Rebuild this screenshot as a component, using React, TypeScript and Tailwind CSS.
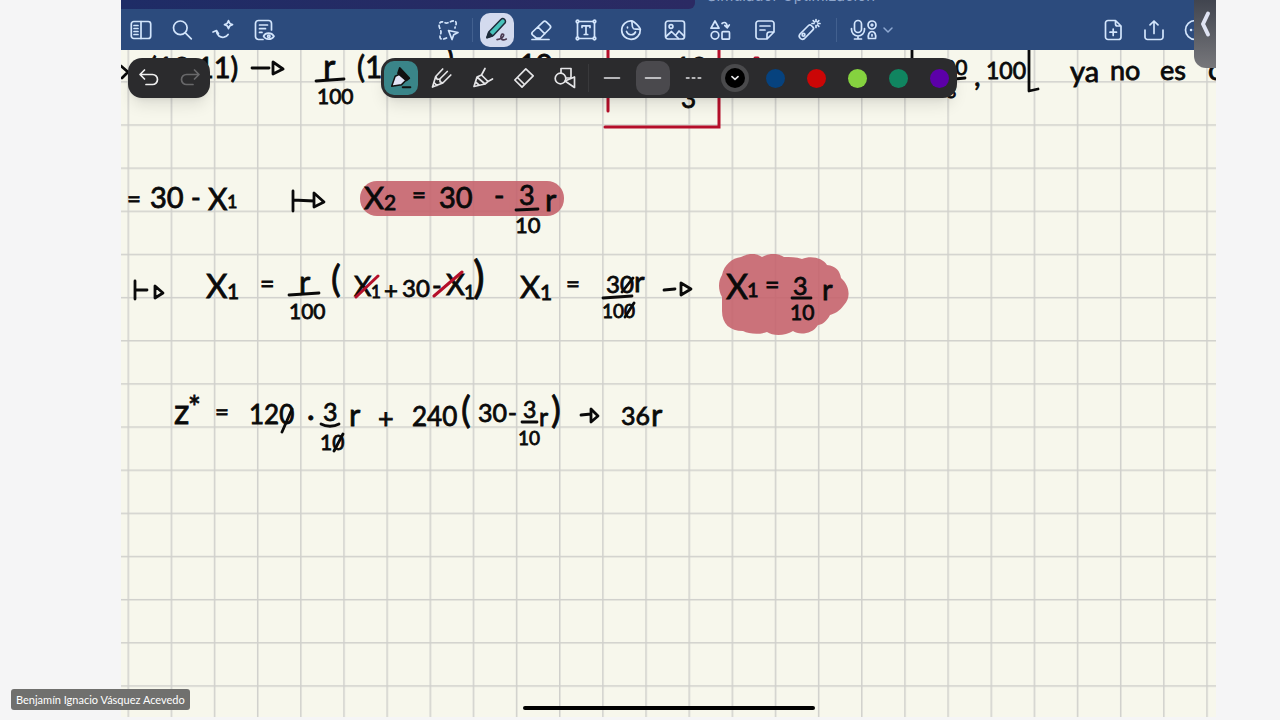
import { type ReactNode, useState } from 'react';

type IconProps = { children: ReactNode; className?: string };

const Icon = ({ children, className = 'size-6' }: IconProps) => (
    <svg
        viewBox="0 0 24 24"
        fill="none"
        stroke="currentColor"
        strokeWidth="1.7"
        strokeLinecap="round"
        strokeLinejoin="round"
        aria-hidden="true"
        className={`${className} shrink-0`}
    >
        {children}
    </svg>
);

type Tool = { name: string; icon: ReactNode };

const leftTools: Tool[] = [
    {
        name: 'Sidebar',
        icon: (
            <Icon>
                <rect x="2.3" y="3.5" width="19.4" height="17" rx="2.5" />
                <path d="M12 3.5v17M5 7.5h4M5 10.5h4M5 13.5h4M5 16.5h4" />
            </Icon>
        ),
    },
    {
        name: 'Search',
        icon: (
            <Icon>
                <circle cx="10.3" cy="9.8" r="6.8" />
                <path d="m15.3 14.8 6 6" />
            </Icon>
        ),
    },
    {
        name: 'Assistant',
        icon: (
            <Icon>
                <path d="m2 14 3.5-1.5 2 3.2M5.300 13c.6 4.500 4 6.800 7.600 6.200 2-.4 3.400-1.500 4.200-2.700" />
                <path d="M17.500 2.700c.5 2.500 1.400 3.500 4 4-2.600.5-3.500 1.500-4 4-.5-2.500-1.400-3.500-4-4 2.600-.5 3.500-1.500 4-4Z" />
            </Icon>
        ),
    },
    {
        name: 'Read mode',
        icon: (
            <Icon>
                <path d="M11 21.500H6.500a3 3 0 0 1-3-3v-13a3 3 0 0 1 3-3h10a3 3 0 0 1 3 3V12M7.500 7h8M7.500 10.700h6M7.500 14.400h2.500" />
                <path d="M11.500 18.200c2-4 8-4 10.500 0-2.500 4-8.500 4-10.500 0Z" />
                <circle cx="16.800" cy="18.200" r="1.200" />
            </Icon>
        ),
    },
];

const middleTools: Tool[] = [
    {
        name: 'Pen',
        icon: (
            <Icon className="size-7">
                <path
                    d="m3.500 18.500 2-5.500L15.300 3a2.300 2.300 0 0 1 3.300 3.300L9 16.500Z"
                    fill="#48c2bb"
                    stroke="#1d2b3a"
                    strokeWidth="1.300"
                />
                <path d="m3.500 18.500 1.500-4.500 3 3Z" fill="#1d2b3a" stroke="#1d2b3a" />
                <path
                    d="M12 20.200c3.500-.2 6.500-3 5.500-4.500-1.200-1.200-3 1.800-1.800 3.800.8 1.300 2.500 1.200 4.300.2"
                    stroke="#4a3a52"
                    strokeWidth="1.400"
                />
            </Icon>
        ),
    },
    {
        name: 'Eraser',
        icon: (
            <Icon>
                <path d="M3.500 14 14.200 3.800a2.200 2.200 0 0 1 3.100 0l3.600 3.600a2.200 2.200 0 0 1 0 3.100L11.500 20H7.200l-3.700-3.200a2 2 0 0 1 0-2.800ZM9 9l6.800 6.800M3 21.500h17" />
            </Icon>
        ),
    },
    {
        name: 'Text box',
        icon: (
            <Icon>
                <path d="M5 3.500h14M5 20.500h14M3.500 5v14M20.500 5v14M8 9.500V7.800h8v1.700M12 8v8.500M10.300 16.500h3.400" />
                <circle cx="3.500" cy="3.500" r="1.300" />
                <circle cx="20.500" cy="3.500" r="1.300" />
                <circle cx="3.500" cy="20.500" r="1.300" />
                <circle cx="20.500" cy="20.500" r="1.300" />
            </Icon>
        ),
    },
    {
        name: 'Sticker',
        icon: (
            <Icon>
                <path d="M12.500 2.800a9.300 9.300 0 1 0 8.800 8.800c-.2-2.500-6.300-8.600-8.800-8.800Z" />
                <path d="M12.500 2.800c1.500 2.200-.5 6 2 7.800 2 1.300 5-.3 6.800 1M7.500 13.500c1.500 4 7 4.500 9 .5M8.500 9v.8" />
            </Icon>
        ),
    },
    {
        name: 'Image',
        icon: (
            <Icon>
                <rect x="2.500" y="3" width="19" height="18" rx="2.500" />
                <circle cx="8" cy="8.500" r="1.900" />
                <path d="m3 18.500 5.500-5 4 4 3.500-4.500 5.200 5.200M12.500 17.500l3 3" />
            </Icon>
        ),
    },
    {
        name: 'Elements',
        icon: (
            <Icon>
                <path d="m7 3 4 7.200H3ZM14 5.500c2.500-2 5-1 5.300 3.500M16.800 7.500l2.500 2.300 2-2.800" />
                <circle cx="7" cy="17.300" r="3.800" />
                <rect x="14" y="13.700" width="7.500" height="7.500" rx="1" />
            </Icon>
        ),
    },
    {
        name: 'Sticky note',
        icon: (
            <Icon>
                <path d="M14 21H5.500a2.500 2.500 0 0 1-2.500-2.500v-13A2.500 2.500 0 0 1 5.500 3h13A2.500 2.500 0 0 1 21 5.500V14ZM14 21v-4.500a2.500 2.500 0 0 1 2.500-2.500H21M7 8h10M7 12h5" />
            </Icon>
        ),
    },
    {
        name: 'Laser pointer',
        icon: (
            <Icon>
                <path d="m3 16 8.500-8.500a2 2 0 0 1 2.800 0l1.600 1.600a2 2 0 0 1 0 2.800L7.500 20.500A3.200 3.200 0 0 1 3 16Z" />
                <circle cx="6.500" cy="16.700" r="1.400" />
                <path d="M19 1.500v2M19 7.500v2M15 5.500h2M21 5.500h2M16.200 2.700l1.300 1.300M20.500 7l1.300 1.300M21.800 2.700 20.500 4" />
            </Icon>
        ),
    },
];

const rightTools: Tool[] = [
    {
        name: 'Add page',
        icon: (
            <Icon>
                <path d="M14.500 2.500H7A2.500 2.500 0 0 0 4.500 5v14A2.500 2.500 0 0 0 7 21.500h10.500A2.500 2.500 0 0 0 20 19V8ZM14.500 2.500V6a2 2 0 0 0 2 2H20M12.200 11v6.500M9 14.200h6.500" />
            </Icon>
        ),
    },
    {
        name: 'Share',
        icon: (
            <Icon>
                <path d="M3 12v7A2.500 2.500 0 0 0 5.500 21.500h13a2.500 2.500 0 0 0 2.500-2.500v-7M12 15.500V3M8 6.800 12 3l4 3.800" />
            </Icon>
        ),
    },
    {
        name: 'More',
        icon: (
            <Icon>
                <circle cx="12" cy="12" r="9.500" />
                <path d="M8 12h.1M12 12h.1M16 12h.1" strokeWidth="2.500" />
            </Icon>
        ),
    },
];

const penStyles: Tool[] = [
    {
        name: 'Fountain pen',
        icon: (
            <Icon className="size-7">
                <path
                    d="m4 19 3-8.500 4.500-2 5 5.200-4 4Z"
                    fill="#e3e4f6"
                    stroke="#111"
                    strokeWidth="1.300"
                />
                <path d="m11 3.500 8 8.700-2.500 1.800L9.500 8Z" fill="#111" stroke="#111" />
                <path d="M13.500 20H20" stroke="#111" />
            </Icon>
        ),
    },
    {
        name: 'Ball pen',
        icon: (
            <Icon>
                <path d="m2.500 21 3.200-10.500 7-7.500M2.500 21l10.300-4 8-8M5.700 10.500l1.500 2.800 2.600-.3.300 2.800 2.700 1.200M9.800 13l7.500-7.500M4 16.500l3 3" />
            </Icon>
        ),
    },
    {
        name: 'Brush pen',
        icon: (
            <Icon>
                <path d="m3 20.500 3-9.500 8 7ZM6 11l4.500-2 6.500 6.500-3 2.500M10.500 9l3.500-6.500M17 15.500l4.500-2.500M4.500 16l3.500 3" />
            </Icon>
        ),
    },
    {
        name: 'Highlighter',
        icon: (
            <Icon>
                <path d="m2.800 14 11-11.200 7.400 7L10 21.200ZM5.500 11.500l7 7" />
            </Icon>
        ),
    },
    {
        name: 'Shape pen',
        icon: (
            <Icon>
                <path d="M8 7V2.500h10V12H13" />
                <circle cx="7.500" cy="12.500" r="5.300" />
                <path d="m12 15 9.500-4v10.500Z" />
            </Icon>
        ),
    },
];

const strokes = [
    { name: 'Medium stroke', dash: undefined },
    { name: 'Thin stroke', dash: undefined },
    { name: 'Dashed stroke', dash: '3 4' },
];

const swatches = [
    { name: 'Black', className: 'bg-black' },
    { name: 'Blue', className: 'bg-[#06427e]' },
    { name: 'Red', className: 'bg-[#cb0606]' },
    { name: 'Lime', className: 'bg-[#85d23f]' },
    { name: 'Green', className: 'bg-[#108560]' },
    { name: 'Purple', className: 'bg-[#5c00a8]' },
];

// how far the page is scrolled to the right, sheet coordinates start there
const SCROLL_X = 121;
const CELL = 43.15;

// x, baseline, font size, text
const notes: [number, number, number, string][] = [
    [149, 78, 29, '(10,11)'],
    [323, 79, 34, 'r'],
    [317, 104, 21, '100'],
    [357, 78, 30, '(1'],
    [446, 70, 30, ')'],
    [519, 75, 29, '10'],
    [674, 78, 29, '10'],
    [681, 108, 26, '3'],
    [931, 75, 21, '100'],
    [946, 98, 18, '3'],
    [974, 86, 29, ','],
    [986, 79, 23, '100'],
    [1070, 82, 29, 'ya'],
    [1110, 80, 27, 'no'],
    [1160, 80, 27, 'es'],
    [1208, 80, 29, 'c'],

    [127, 207, 24, '='],
    [150, 208, 29, '30'],
    [191, 207, 26, '-'],
    [208, 210, 30, 'X'],
    [227, 208, 18, '1'],
    [364, 209, 31, 'X'],
    [384, 210, 21, '2'],
    [412, 203, 24, '='],
    [439, 208, 29, '30'],
    [494, 206, 28, '-'],
    [519, 205, 27, '3'],
    [515, 233, 22, '10'],
    [545, 211, 31, 'r'],

    [206, 298, 33, 'X'],
    [227, 299, 21, '1'],
    [260, 293, 25, '='],
    [299, 293, 31, 'r'],
    [289, 319, 21, '100'],
    [331, 292, 37, '('],
    [354, 296, 27, 'X'],
    [371, 298, 17, '1'],
    [384, 299, 24, '+'],
    [402, 297, 24, '30'],
    [432, 295, 26, '-'],
    [446, 295, 29, 'X'],
    [464, 299, 19, '1'],
    [473, 293, 44, ')'],
    [520, 298, 31, 'X'],
    [540, 300, 21, '1'],
    [566, 292, 24, '='],
    [606, 293, 24, '30'],
    [634, 292, 29, 'r'],
    [602, 318, 19, '100'],
    [726, 299, 34, 'X'],
    [747, 297, 20, '1'],
    [765, 294, 25, '='],
    [793, 295, 25, '3'],
    [790, 320, 21, '10'],
    [822, 300, 29, 'r'],

    [174, 424, 34, 'z'],
    [188, 418, 30, '*'],
    [215, 420, 24, '='],
    [249, 424, 26, '120'],
    [307, 426, 29, '·'],
    [323, 421, 25, '3'],
    [320, 450, 21, '10'],
    [349, 426, 31, 'r'],
    [378, 428, 27, '+'],
    [412, 426, 26, '240'],
    [461, 423, 37, '('],
    [478, 422, 25, '30'],
    [508, 421, 24, '-'],
    [523, 418, 23, '3'],
    [518, 445, 19, '10'],
    [539, 426, 25, 'r'],
    [551, 423, 37, ')'],
    [621, 425, 25, '36'],
    [651, 426, 31, 'r'],
];

const Sheet = () => (
    <svg
        role="img"
        aria-label="Handwritten notes on squared paper"
        className="absolute inset-0 size-full bg-[#f7f7ec]"
    >
        <defs>
            <pattern
                id="squares"
                x="6.500"
                y="38"
                width={CELL}
                height={CELL}
                patternUnits="userSpaceOnUse"
            >
                <path
                    d={`M.75 0V${CELL}M0 .75H${CELL}`}
                    stroke="#d0d0cc"
                    strokeWidth="1.500"
                />
            </pattern>
        </defs>
        <rect width="100%" height="100%" fill="url(#squares)" />
        <g transform={`translate(${-SCROLL_X} 0)`}>
            <g fill="#c5606a" opacity=".88">
                <rect x="360" y="181" width="204" height="35" rx="17" />
                <path d="M741 257c8-4 15-4 21 0 7-4 16-4 22 0 6 0 12 0 18 2 9-4 21-1 25 6 9 1 13 6 14 13 9 8 10 20 3 27-4 6-10 9-14 10-3 6-8 10-12 10-6 10-20 10-25 6-8 5-20 5-26 1-8 3-18 2-24-1-13 0-21-7-21-20v-14c-4-7-4-16 0-22 2-10 10-17 19-18Z" />
            </g>
            <g
                fill="#0a0a0a"
                stroke="#0a0a0a"
                strokeWidth=".8"
                className="font-['Lato',sans-serif]"
            >
                {notes.map(([x, y, size, text]) => (
                    <text key={`${x}-${y}`} x={x} y={y} fontSize={size}>
                        {text}
                    </text>
                ))}
            </g>
            <g
                fill="none"
                stroke="#0a0a0a"
                strokeWidth="2.800"
                strokeLinecap="round"
                strokeLinejoin="round"
            >
                {/* fraction bars */}
                <path d="m316 81 28-2M516 210l22-1M289 295l30-2M603 298l29-2M792 298h19M321 424c5 3 13 3 18 0M522 422h15M955 79l10-1" />
                {/* arrows */}
                <path d="M252 68h17M273 62v12l10-5ZM121 66l7 6-6 6" />
                <path d="M293 191v20M293 200l21 1M314 193v14l10-5Z" />
                <path d="M135 281v18M135 290h12M155 286v12l8-5Z" />
                <path d="M664 290l11-1M681 283v12l10-6Z" />
                <path d="M581 415l10-1M591 409v13l7-6Z" />
                {/* cancelled zeros */}
                <path d="m622 292 11-14M625 317l9-14M282 432l10-23M334 451l9-17" />
                {/* interval */}
                <path d="M912 46v24M1029 50v41l9-2" />
            </g>
            <g fill="none" stroke="#b50f2a" strokeWidth="3" strokeLinecap="round">
                <path d="M608 46v65M605 127h114V46M356 297l22-21M434 296l28-24M755 58h3" />
            </g>
        </g>
    </svg>
);

const Header = () => (
    <header className="relative h-[50px] overflow-hidden bg-[#2c4b7d] font-['Inter',sans-serif] text-[#d3e5fc]">
        <div className="flex h-[9px] overflow-hidden">
            <div className="h-full w-[574px] rounded-br-md bg-gradient-to-r from-[#1e2c66] to-[#2b2a63]" />
            <p className="-mt-3 flex-1 pl-3 text-[15px]/4 text-[#8ea6cc]">
                Simulador Optimización
            </p>
        </div>
        <div className="grid h-[41px] grid-cols-[1fr_auto_1fr] items-center pr-[21px] pl-2">
            <div className="flex gap-[17px]">
                {leftTools.map(({ name, icon }) => (
                    <button key={name} type="button" aria-label={name}>
                        {icon}
                    </button>
                ))}
            </div>
            <div className="flex items-center">
                <button
                    type="button"
                    aria-label="Lasso"
                    className="flex w-[34px] justify-center"
                >
                    <Icon>
                        <path
                            d="M10.500 20c-2 .8-4.500 1.800-6 .5-1.500-2 .5-4 .5-6.500s-3-5.500-1.500-8.500S8 4.500 10 5s7-3.500 9.500-1.500c2 2-.5 4.500-.5 6.500"
                            strokeDasharray="3 2.600"
                        />
                        <path d="m12.500 12.500 9.500 2-4.300 2.300-1.700 4.700Z" />
                    </Icon>
                </button>
                <span className="mx-[7px] h-6 w-px bg-[#42608f]" />
                <div className="flex w-[347px] items-center justify-between">
                    {middleTools.map(({ name, icon }) => (
                        <button
                            key={name}
                            type="button"
                            aria-label={name}
                            className={`flex size-[34px] items-center justify-center rounded-[10px] ${name === 'Pen' ? 'bg-[#d3daee]' : ''}`}
                        >
                            {icon}
                        </button>
                    ))}
                </div>
                <span className="mx-[9px] h-6 w-px bg-[#42608f]" />
                <button type="button" aria-label="Record audio" className="flex items-center">
                    <Icon>
                        <rect x="8.500" y="2.500" width="7" height="12" rx="3.500" />
                        <path d="M5.500 10.500v1a6.500 6.500 0 0 0 13 0v-1M12 18v3M8.500 21h7" />
                    </Icon>
                    <svg
                        viewBox="0 0 12 24"
                        fill="none"
                        stroke="currentColor"
                        strokeWidth="1.700"
                        strokeLinejoin="round"
                        strokeLinecap="round"
                        aria-hidden="true"
                        className="-ml-1 h-6 w-3"
                    >
                        <circle cx="6" cy="7" r="4" />
                        <path d="M6 6v2M5 7h2M2.500 20.500c-.8-4 .8-7 3.500-7s4.300 3 3.500 7ZM6 16.500v1.500" />
                    </svg>
                    <Icon className="ml-1 size-3 text-[#8fa9d2]">
                        <path d="m4 8 8 8 8-8" strokeWidth="3" />
                    </Icon>
                </button>
            </div>
            <div className="-mr-3 flex justify-end gap-[17px]">
                {rightTools.map(({ name, icon }) => (
                    <button key={name} type="button" aria-label={name}>
                        {icon}
                    </button>
                ))}
            </div>
        </div>
    </header>
);

const PenBar = () => {
    const [pen, setPen] = useState('Fountain pen');
    const [stroke, setStroke] = useState('Thin stroke');
    const [color, setColor] = useState('Black');

    return (
        <div className="absolute top-[58px] left-1/2 flex h-10 w-[576px] -translate-x-1/2 items-center gap-[7px] overflow-hidden rounded-[14px] bg-[#2b2b2d] pl-[3px] text-[#e4e4e6] shadow-lg">
            {penStyles.map(({ name, icon }) => (
                <button
                    key={name}
                    type="button"
                    aria-label={name}
                    onClick={() => setPen(name)}
                    className={`flex size-[34px] shrink-0 items-center justify-center rounded-[10px] ${pen === name ? 'bg-[#3a8589]' : ''}`}
                >
                    {icon}
                </button>
            ))}
            <span className="-mx-px h-7 w-px shrink-0 bg-[#39393b]" />
            {strokes.map(({ name, dash }) => (
                <button
                    key={name}
                    type="button"
                    aria-label={name}
                    onClick={() => setStroke(name)}
                    className={`flex size-[34px] shrink-0 items-center justify-center rounded-[10px] ${stroke === name ? 'bg-[#4a494d]' : ''}`}
                >
                    <Icon className="size-5">
                        <path d="M3 12h18" strokeWidth="2" strokeDasharray={dash} />
                    </Icon>
                </button>
            ))}
            {swatches.map(({ name, className }) => (
                <button
                    key={name}
                    type="button"
                    aria-label={name}
                    onClick={() => setColor(name)}
                    className="flex size-[34px] shrink-0 items-center justify-center"
                >
                    <span
                        className={`flex items-center justify-center rounded-full ${className} ${color === name ? 'size-5 ring-4 ring-[#4a4a4c]' : 'size-[19px]'}`}
                    >
                        {color === name && (
                            <Icon className="size-2">
                                <path d="m3 8 9 8 9-8" strokeWidth="5" />
                            </Icon>
                        )}
                    </span>
                </button>
            ))}
        </div>
    );
};

export default function App() {
    return (
        <div className="relative flex min-h-screen bg-[#f5f5f6] pr-16 pb-[3px] pl-[121px]">
            <main className="relative min-w-0 flex-1 overflow-hidden">
                <Sheet />
                <Header />

                <div className="absolute top-[58px] left-[7px] flex h-10 w-[82px] items-center justify-around rounded-[14px] bg-[#2b2b2d] text-[#f0f0f0] shadow-lg">
                    <button type="button" aria-label="Undo">
                        <Icon>
                            <path d="M7.500 4 3 8.500 7.500 13M3.500 8.500h12a5 5 0 0 1 0 10H9" />
                        </Icon>
                    </button>
                    <button type="button" aria-label="Redo" className="text-[#68686a]">
                        <Icon>
                            <path d="M16.500 4 21 8.500 16.500 13M20.500 8.500h-12a5 5 0 0 0 0 10H15" />
                        </Icon>
                    </button>
                </div>
                <PenBar />

                <button
                    type="button"
                    aria-label="Show panel"
                    className="absolute top-0 right-0 flex h-[68px] w-[22px] justify-center rounded-bl-xl bg-gradient-to-b from-[#41454f] to-[#77777b] pt-[9px] text-[#dfe3f2]"
                >
                    <svg viewBox="0 0 12 30" className="h-[30px] w-3" fill="none">
                        <path
                            d="M9 4.500 4 15l5 10.500"
                            stroke="currentColor"
                            strokeWidth="4"
                            strokeLinecap="round"
                            strokeLinejoin="round"
                        />
                    </svg>
                </button>

                <div className="absolute bottom-[7px] left-1/2 h-[4px] w-[292px] -translate-x-1/2 rounded-full bg-black" />
            </main>
            <p className="absolute bottom-[10px] left-[11px] rounded-[3px] bg-[#70706e] px-[5px] font-['Lato',sans-serif] text-[11px]/[21px] text-white">
                Benjamín Ignacio Vásquez Acevedo
            </p>
        </div>
    );
}
